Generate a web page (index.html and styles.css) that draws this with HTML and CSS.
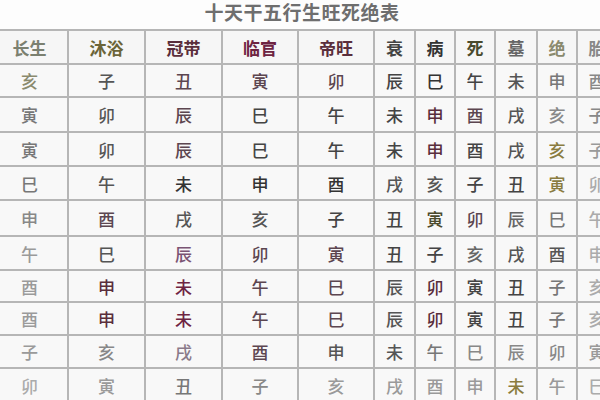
FILE: index.html
```html
<!DOCTYPE html>
<html lang="zh">
<head>
<meta charset="utf-8">
<title>十天干五行生旺死绝表</title>
<link rel="stylesheet" href="styles.css">
</head>
<body>
<div class="page">
  <h1 class="title">十天干五行生旺死绝表</h1>
  <div class="grid">
    <div class="hd g1">长生</div><div class="hd o1">沐浴</div><div class="hd r1">冠带</div><div class="hd r2">临官</div><div class="hd r1">帝旺</div><div class="hd t4">衰</div><div class="hd t3">病</div><div class="hd o4">死</div><div class="hd t6">墓</div><div class="hd o3">绝</div><div class="hd t8">胎</div>

    <div class="o3">亥</div><div class="t5">子</div><div class="r3">丑</div><div class="r3">寅</div><div class="r3">卯</div><div class="t4">辰</div><div class="t3">巳</div><div class="t4">午</div><div class="t5">未</div><div class="t7">申</div><div class="t8">酉</div>

    <div class="t7">寅</div><div class="t5">卯</div><div class="r3">辰</div><div class="t4">巳</div><div class="t4">午</div><div class="t4">未</div><div class="r1">申</div><div class="r3">酉</div><div class="t5">戌</div><div class="t8">亥</div><div class="t8">子</div>

    <div class="t7">寅</div><div class="t5">卯</div><div class="r3">辰</div><div class="t4">巳</div><div class="t4">午</div><div class="t4">未</div><div class="r1">申</div><div class="t4">酉</div><div class="t5">戌</div><div class="o2">亥</div><div class="t9">子</div>

    <div class="t7">巳</div><div class="t5">午</div><div class="t3">未</div><div class="t3">申</div><div class="t3">酉</div><div class="t5">戌</div><div class="t5">亥</div><div class="t4">子</div><div class="t4">丑</div><div class="o2">寅</div><div class="ta">卯</div>

    <div class="t8">申</div><div class="r3">酉</div><div class="t5">戌</div><div class="t5">亥</div><div class="t4">子</div><div class="t4">丑</div><div class="o4">寅</div><div class="r3">卯</div><div class="t6">辰</div><div class="t7">巳</div><div class="ta">午</div>

    <div class="t9">午</div><div class="t5">巳</div><div class="p1">辰</div><div class="r3">卯</div><div class="r3">寅</div><div class="t4">丑</div><div class="t4">子</div><div class="t6">亥</div><div class="t5">戌</div><div class="t5">酉</div><div class="ta">申</div>

    <div class="t9">酉</div><div class="r1">申</div><div class="r2">未</div><div class="r3">午</div><div class="r3">巳</div><div class="t5">辰</div><div class="r1">卯</div><div class="t4">寅</div><div class="t4">丑</div><div class="t7">子</div><div class="ta">亥</div>

    <div class="t9">酉</div><div class="r1">申</div><div class="r2">未</div><div class="r3">午</div><div class="r3">巳</div><div class="t5">辰</div><div class="r1">卯</div><div class="t4">寅</div><div class="t4">丑</div><div class="t7">子</div><div class="ta">亥</div>

    <div class="t9">子</div><div class="t8">亥</div><div class="p2">戌</div><div class="r3">酉</div><div class="t5">申</div><div class="t5">未</div><div class="t7">午</div><div class="t8">巳</div><div class="t8">辰</div><div class="t8">卯</div><div class="t9">寅</div>

    <div class="ta">卯</div><div class="t9">寅</div><div class="t7">丑</div><div class="t8">子</div><div class="t9">亥</div><div class="t9">戌</div><div class="t9">酉</div><div class="t9">申</div><div class="o2">未</div><div class="t9">午</div><div class="ta">巳</div>
  </div>
</div>
</body>
</html>
```

FILE: styles.css
```css
html, body {
  margin: 0;
  padding: 0;
  background: #fdfdfd;
}

.page {
  width: 600px;
  height: 400px;
  overflow: hidden;
  font-family: "Noto Sans CJK SC", "Noto Sans", sans-serif;
}

.title {
  margin: 0;
  height: 29px;
  line-height: 24px;
  font-size: 19px;
  font-weight: 700;
  color: #6e6e6e;
  text-align: center;
  padding-left: 4px;
  letter-spacing: 0.5px;
}

.grid {
  display: grid;
  margin-left: -10px;
  width: 628px;
  background: #b6b6b6;
  border-top: 2px solid #b6b6b6;
  border-left: 2px solid #b6b6b6;
  gap: 2px;
  grid-template-columns: 75px 75px 75px 74px 74px 39px 38px 38px 40px 38px 38px;
  grid-template-rows: 32px 31px 33px 32px 32px 34px 32px 30px 31px 31px 33px;
}

.grid > div {
  background: #f8f8f8;
  display: flex;
  align-items: center;
  justify-content: center;
  font-size: 17px;
  font-weight: 500;
  line-height: 1;
}

.grid > .hd {
  font-weight: 700;
  font-size: 17px;
  background: #f6f6f6;
}

.t3 { color: #333333; }
.t4 { color: #444444; }
.t5 { color: #555555; }
.t6 { color: #666666; }
.t7 { color: #777777; }
.t8 { color: #888888; }
.t9 { color: #9a9a9a; }
.ta { color: #ababab; }
.r1 { color: #5a2e3c; }
.r2 { color: #6e2442; }
.r3 { color: #5c4650; }
.p1 { color: #7a5474; }
.p2 { color: #8a7a8a; }
.o1 { color: #6b6438; }
.o2 { color: #8a7c40; }
.o3 { color: #8a8a6e; }
.o4 { color: #4a4a2c; }
.g1 { color: #7b8070; }
```
